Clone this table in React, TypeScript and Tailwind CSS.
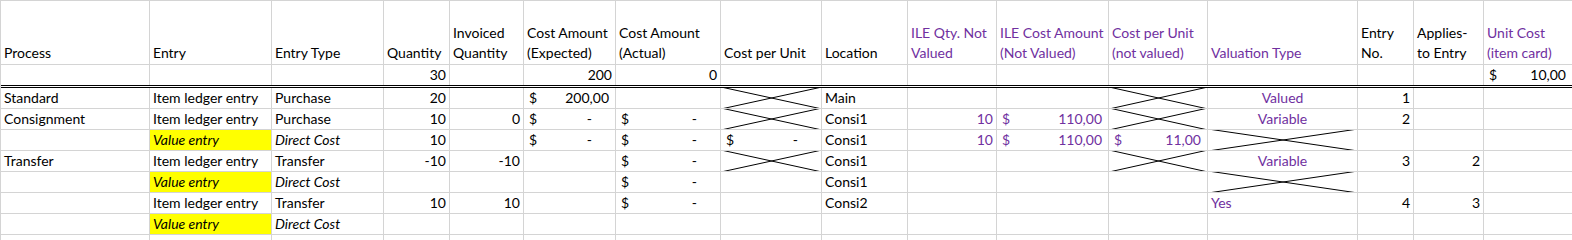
import React from 'react';

type Cell =
  | null
  | { kind: 'text'; t: string; a?: 'l' | 'r' | 'c'; p?: boolean; i?: boolean; y?: boolean }
  | { kind: 'acc'; v: string; p?: boolean }
  | { kind: 'x' };

const COLS =
  'grid grid-cols-[149px_122px_112px_66px_74px_92px_105px_101px_86px_89px_112px_99px_150px_56px_70px_89px]';

const T = (t: string): Cell => ({ kind: 'text', t });
const R = (t: string, p?: boolean): Cell => ({ kind: 'text', t, a: 'r', p });
const C = (t: string, p?: boolean): Cell => ({ kind: 'text', t, a: 'c', p });
const P = (t: string): Cell => ({ kind: 'text', t, p: true });
const I = (t: string): Cell => ({ kind: 'text', t, i: true });
const Y = (t: string): Cell => ({ kind: 'text', t, i: true, y: true });
const A = (v: string, p?: boolean): Cell => ({ kind: 'acc', v, p });
const X: Cell = { kind: 'x' };
const _ = null;

const headers: { lines: string[]; p?: boolean }[] = [
  { lines: ['Process'] },
  { lines: ['Entry'] },
  { lines: ['Entry Type'] },
  { lines: ['Quantity'] },
  { lines: ['Invoiced', 'Quantity'] },
  { lines: ['Cost Amount', '(Expected)'] },
  { lines: ['Cost Amount', '(Actual)'] },
  { lines: ['Cost per Unit'] },
  { lines: ['Location'] },
  { lines: ['ILE Qty. Not', 'Valued'], p: true },
  { lines: ['ILE Cost Amount', '(Not Valued)'], p: true },
  { lines: ['Cost per Unit', '(not valued)'], p: true },
  { lines: ['Valuation Type'], p: true },
  { lines: ['Entry', 'No.'] },
  { lines: ['Applies-', 'to Entry'] },
  { lines: ['Unit Cost', '(item card)'], p: true },
];

const totals: Cell[] = [_, _, _, R('30'), _, R('200'), R('0'), _, _, _, _, _, _, _, _, A('10,00')];

const rows: Cell[][] = [
  [T('Standard'), T('Item ledger entry'), T('Purchase'), R('20'), _, A('200,00'), _, X, T('Main'), _, _, X, C('Valued', true), R('1'), _, _],
  [T('Consignment'), T('Item ledger entry'), T('Purchase'), R('10'), R('0'), A('-'), A('-'), X, T('Consi1'), R('10', true), A('110,00', true), X, C('Variable', true), R('2'), _, _],
  [_, Y('Value entry'), I('Direct Cost'), R('10'), _, A('-'), A('-'), A('-'), T('Consi1'), R('10', true), A('110,00', true), A('11,00', true), X, _, _, _],
  [T('Transfer'), T('Item ledger entry'), T('Transfer'), R('-10'), R('-10'), _, A('-'), X, T('Consi1'), _, _, X, C('Variable', true), R('3'), R('2'), _],
  [_, Y('Value entry'), I('Direct Cost'), _, _, _, A('-'), _, T('Consi1'), _, _, _, X, _, _, _],
  [_, T('Item ledger entry'), T('Transfer'), R('10'), R('10'), _, A('-'), _, T('Consi2'), _, _, _, P('Yes'), R('4'), R('3'), _],
  [_, Y('Value entry'), I('Direct Cost'), _, _, _, _, _, _, _, _, _, _, _, _, _],
  [_, _, _, _, _, _, _, _, _, _, _, _, _, _, _, _],
];

function CellView({ c }: { c: Cell }) {
  const base = 'relative h-full border-r border-[#d4d4d4] flex items-end overflow-hidden whitespace-nowrap';
  if (!c) return <div className={base} />;
  if (c.kind === 'x') {
    return (
      <div className={base}>
        {/* diagonal borders */}
        <svg className="absolute -top-px left-0 w-[calc(100%+1px)] h-[calc(100%+2px)]" viewBox="0 0 100 100" preserveAspectRatio="none">
          <line x1="0" y1="0" x2="100" y2="100" stroke="#000" strokeWidth="1" vectorEffect="non-scaling-stroke" />
          <line x1="0" y1="100" x2="100" y2="0" stroke="#000" strokeWidth="1" vectorEffect="non-scaling-stroke" />
        </svg>
      </div>
    );
  }
  if (c.kind === 'acc') {
    return (
      <div className={`${base} justify-between pl-[5px] pr-[6px] ${c.p ? 'text-[#7030a0]' : 'text-black'}`}>
        <span>$</span>
        {c.v === '-' ? <span className="mr-[17px]">-</span> : <span>{c.v}</span>}
      </div>
    );
  }
  const align = c.a === 'r' ? 'justify-end' : c.a === 'c' ? 'justify-center' : 'justify-start';
  return (
    <div
      className={`${base} ${align} px-[3px] ${c.p ? 'text-[#7030a0]' : 'text-black'} ${c.i ? 'italic' : ''} ${
        c.y ? 'bg-[#ffff00]' : ''
      }`}
    >
      {c.t}
    </div>
  );
}

export default function App() {
  return (
    <div className="w-[1572px] h-[240px] overflow-hidden bg-white font-['Lato',sans-serif] text-[14px] leading-[20px] text-black">
      <div className="border-l border-[#d4d4d4]">
        {/* Header */}
        <div className={`${COLS} h-[65px] border-y border-[#d4d4d4]`}>
          {headers.map((h, i) => (
            <div
              key={i}
              className={`border-r border-[#d4d4d4] flex flex-col justify-end px-[3px] pb-px overflow-hidden whitespace-nowrap ${
                h.p ? 'text-[#7030a0]' : ''
              }`}
            >
              {h.lines.map((l, j) => (
                <div key={j}>{l}</div>
              ))}
            </div>
          ))}
        </div>

        {/* Totals */}
        <div className={`${COLS} h-[23px] border-b-[3px] border-double border-black`}>
          {totals.map((c, i) => (
            <CellView key={i} c={c} />
          ))}
        </div>

        {/* Entries */}
        {rows.map((r, ri) => (
          <div key={ri} className={`${COLS} h-[21px] border-b border-[#d4d4d4]`}>
            {r.map((c, i) => (
              <CellView key={i} c={c} />
            ))}
          </div>
        ))}
      </div>
    </div>
  );
}
